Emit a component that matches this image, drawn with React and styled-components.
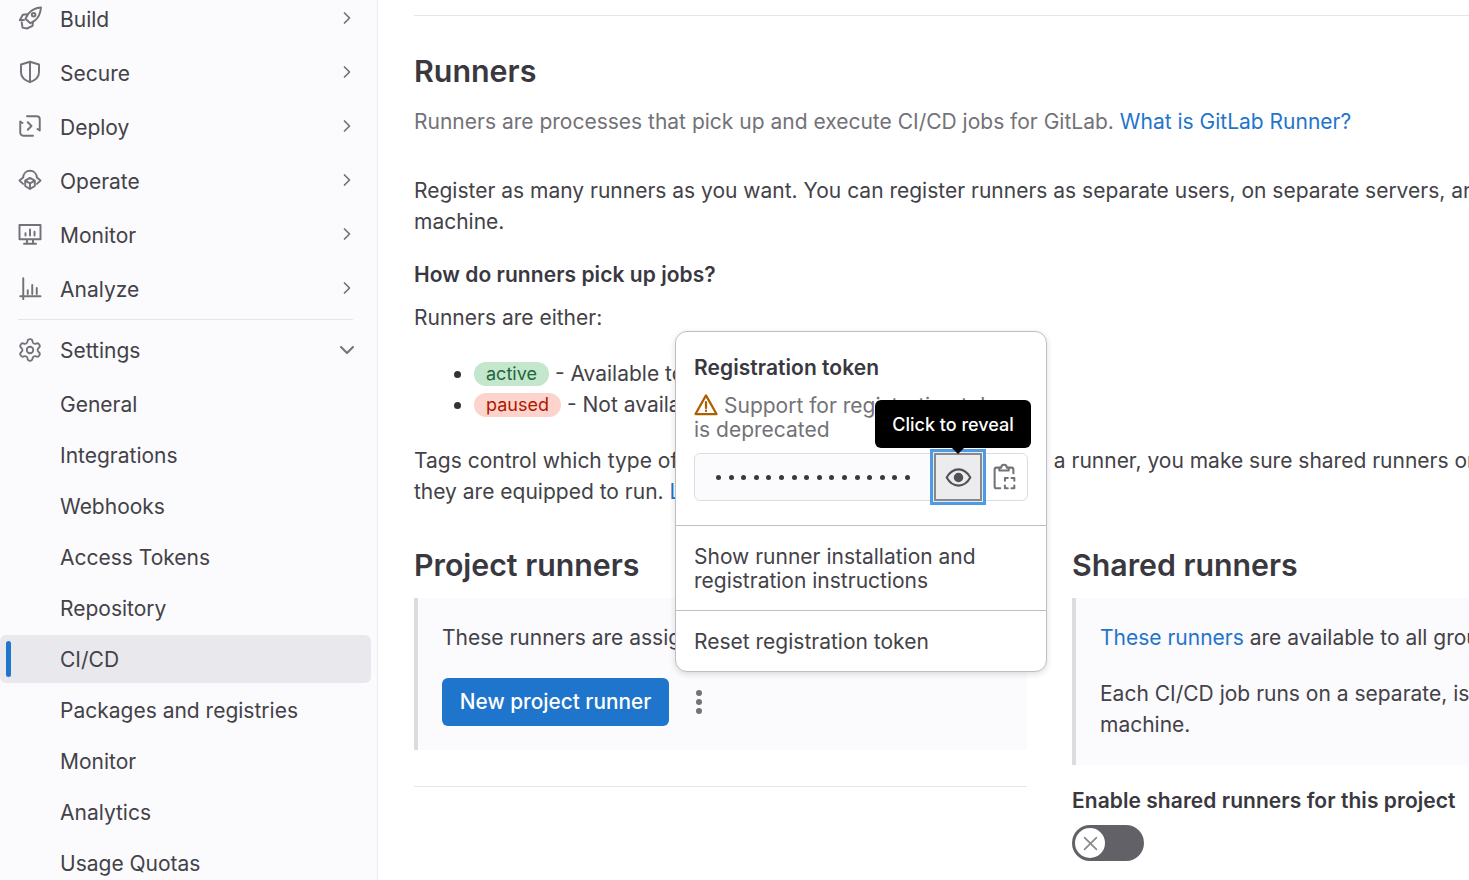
import React from 'react';
import styled, { createGlobalStyle } from 'styled-components';
import { Settings } from 'lucide-react';

const Global = createGlobalStyle`
html, body { margin: 0; padding: 0; height: 880px; overflow: hidden; background: #fff; }
body { font-family: Inter, "Noto Sans", sans-serif; font-size: 21px; color: #434248; }
* { box-sizing: border-box; }
`;

const Page = styled.div`
display: flex;
width: 1469px;
height: 880px;
overflow: hidden;
`;

// sidebar
const Sidebar = styled.nav`
flex: 0 0 378px;
height: 880px;
overflow: hidden;
background: #fbfafd;
border-right: 1px solid #ececef;
`;
const NavList = styled.div`
margin-top: -9px;
`;
const NavRow = styled.div`
display: flex;
align-items: center;
height: 54px;
padding: 0 20px 0 18px;
gap: 18px;
svg { flex: none; }
span { flex: 1; padding-top: ${p => (p.$open ? '0' : '2px')}; }
`;
const Divider = styled.div`
height: 1px;
margin: 4px 18px 3px 18px;
width: 335px;
background: #e6e5e9;
`;
const SubList = styled.div`
display: flex;
flex-direction: column;
gap: 3px;
margin-top: 3px;
padding-right: 6px;
`;
const SubRow = styled.div`
position: relative;
flex: none;
display: flex;
align-items: center;
height: 48px;
padding-left: 60px;
border-radius: 6px;
background: ${p => (p.$active ? '#e9e8ec' : 'transparent')};
${p => p.$active && `
&::before {
  content: '';
  position: absolute;
  left: 6px;
  top: 6px;
  bottom: 6px;
  width: 5px;
  border-radius: 3px;
  background: #1f75cb;
}`}
`;
const GearIcon = styled(Settings)`
margin: 0 -1px;
`;
const ChevronDown = styled.svg`
margin-right: -2px;
`;

// main
const Main = styled.main`
flex: 1;
min-width: 0;
overflow: hidden;
position: relative;
padding: 15px 0 0 36px;
`;
const Inner = styled.div`
width: 1271px;
`;
const Rule = styled.hr`
margin: 0;
border: 0;
height: 1px;
background: #e6e5e9;
`;
const Title = styled.h2`
margin: 33px 0 0;
font-size: 30.4px;
line-height: 44px;
font-weight: 600;
color: #3a383f;
`;
const Para = styled.p`
margin: ${p => p.$top || 0}px 0 0;
line-height: 31px;
color: ${p => (p.$muted ? '#737278' : 'inherit')};
`;
const Bold = styled.p`
margin: ${p => p.$top || 0}px 0 0;
line-height: 31px;
font-weight: 600;
letter-spacing: 0.05px;
color: #3a383f;
`;
const Link = styled.a`
color: #1f75cb;
`;
const StateList = styled.ul`
margin: 25px 0 0;
padding-left: 60px;
line-height: 31px;
li::marker { color: #333238; }
`;
const Badge = styled.span`
display: inline-block;
height: 24px;
line-height: 24px;
padding: 0 12px;
margin-right: 6px;
border-radius: 12px;
font-size: 18px;
vertical-align: 1px;
background: ${p => (p.$kind === 'active' ? '#c3e6cd' : '#fdd4cd')};
color: ${p => (p.$kind === 'active' ? '#24663b' : '#ae1800')};
`;
const Columns = styled.div`
display: grid;
grid-template-columns: 613px 613px;
column-gap: 45px;
margin-top: 36px;
`;
const ColTitle = styled.h3`
margin: 0;
font-size: 30.3px;
line-height: 44px;
font-weight: 600;
color: #3a383f;
`;
const Card = styled.div`
margin-top: 11px;
padding: 24px 28px ${p => p.$bottom || 24}px 24px;
background: #fbfafd;
border-left: 4px solid #dcdcde;
`;
const CardActions = styled.div`
display: flex;
align-items: center;
gap: 27px;
margin-top: 25px;
`;
const PrimaryButton = styled.button`
height: 48px;
width: 227px;
padding: 0 0 2px;
border: 0;
border-radius: 6px;
background: #1f75cb;
color: #fff;
font: 500 20.8px Inter, sans-serif;
`;
const Kebab = styled.div`
display: flex;
flex-direction: column;
gap: 3px;
i { width: 6px; height: 6px; border-radius: 50%; background: #737278; }
`;
const ColRule = styled.hr`
margin: 36px 0 0;
border: 0;
height: 1px;
background: #e6e5e9;
`;
const Toggle = styled.div`
position: relative;
width: 72px;
height: 36px;
margin-top: 9px;
border-radius: 18px;
background: #626168;
`;
const Thumb = styled.div`
position: absolute;
left: 3px;
top: 3px;
width: 30px;
height: 30px;
border-radius: 50%;
background: #fff;
display: flex;
align-items: center;
justify-content: center;
`;

// dropdown
const Popover = styled.div`
position: absolute;
left: 297px;
top: 331px;
width: 372px;
height: 341px;
background: #fff;
border: 1px solid #bfbfc3;
border-radius: 12px;
box-shadow: 0 2px 6px rgba(5, 5, 6, 0.14);
z-index: 2;
`;
const PopTop = styled.div`
height: 194px;
padding: 18px 18px 0;
border-bottom: 1px solid #bfbfc3;
`;
const PopTitle = styled.div`
font-weight: 600;
line-height: 35px;
letter-spacing: 0.05px;
color: #3a383f;
`;
const PopWarn = styled.div`
line-height: 24px;
margin-top: 8px;
white-space: nowrap;
color: #737278;
svg { vertical-align: -4px; margin-right: 6px; }
`;
const TokenGroup = styled.div`
display: flex;
position: relative;
width: 334px;
height: 48px;
margin-top: 11px;
border: 1px solid #dcdcde;
border-radius: 6px;
`;
const TokenField = styled.div`
flex: 1;
display: flex;
align-items: center;
padding-left: 21px;
gap: 7.6px;
background: #fbfafd;
border-radius: 6px 0 0 6px;
`;
const Dot = styled.b`
flex: none;
width: 5px;
height: 5px;
border-radius: 50%;
background: #3a383f;
`;
const EyeButton = styled.div`
position: relative;
flex: 0 0 48px;
margin: -1px 0;
height: 48px;
display: flex;
align-items: center;
justify-content: center;
background: #ececef;
border: 2px solid #89888d;
box-shadow: 0 0 0 1px #dfeefb, 0 0 0 4px #4f9ae0;
`;
const CopyButton = styled.div`
flex: 0 0 45px;
display: flex;
align-items: center;
justify-content: center;
padding-right: 2px;
`;
const Tooltip = styled.div`
position: absolute;
left: 180px;
top: -54px;
width: 156px;
height: 48px;
display: flex;
align-items: center;
justify-content: center;
background: #000;
color: #fff;
border-radius: 6px;
font-size: 18px;
font-weight: 500;
z-index: 3;
&::after {
  content: '';
  position: absolute;
  left: 77px;
  bottom: -6px;
  border-left: 6px solid transparent;
  border-right: 6px solid transparent;
  border-top: 6px solid #000;
}
`;
const PopItem = styled.div`
padding: 19px 18px 17px;
line-height: 24px;
border-bottom: ${p => (p.$last ? '0' : '1px solid #bfbfc3')};
`;

// icons
const Ico = ({ children, size = 24, color = '#737278', sw = 1.3 }) => (
  <svg width={size} height={size} viewBox="0 0 16 16" fill="none" stroke={color} strokeWidth={sw} strokeLinecap="round" strokeLinejoin="round">
    {children}
  </svg>
);
const icons = {
  Build: <Ico><path d="M15.300 1C11.500 1.200 8.800 2.800 6.800 5.200L5 8.500 8.200 11.500 11.200 9.700C13.600 7.800 15 4.800 15.300 1Z" /><circle cx="10.400" cy="5.800" r="1.200" /><path d="M6 5.500 3.200 5.800 1.200 9.500 4 9.300M10 10.500 9.700 13.200 6 15 3 14.400 2.500 11" /></Ico>,
  Secure: <Ico><path d="M8 1.200 14 3v5.200c0 3-2.600 5.400-6 6.600-3.400-1.200-6-3.600-6-6.600V3ZM8 1.200v13.600" /></Ico>,
  Deploy: <Ico><path d="M6 1.500h6.500a2 2 0 0 1 2 2V11l-1.500-1M10 14.500H3.500a2 2 0 0 1-2-2V5L3 6M6.500 5.500 9 8l-2.500 2.500" /></Ico>,
  Operate: <Ico><path d="M3.400 10.600 1 8.400 3.400 6.400C3.600 3.600 5.600 1.800 8 1.800s4.400 1.800 4.600 4.600L15 8.400l-2.400 2.200" /><path d="M8 6.600 11.200 8.400V12L8 14 4.800 12V8.400ZM4.800 8.400 8 10.200 11.200 8.400M8 10.200V14" /></Ico>,
  Monitor: <Ico><path d="M1 2h14v9.500H1ZM4 14.500h8M6 11.500v3M10 11.500v3M5 9V7.500M8 9V5M11 9V6.500" /></Ico>,
  Analyze: <Ico><path d="M1.500 13.500h13.500M3.500 1.500v14M6.500 12V9.500M9.500 12V6M12.500 12V8" /></Ico>,
  Settings: <GearIcon size={26} color="#737278" strokeWidth={1.7} />,
};
const Chevron = () => (
  <Ico size={20} color="#737278" sw={1.4}>
    <path d="M6 4l4 4-4 4" />
  </Ico>
);

const top = ['Build', 'Secure', 'Deploy', 'Operate', 'Monitor', 'Analyze'];
const sub = ['General', 'Integrations', 'Webhooks', 'Access Tokens', 'Repository', 'CI/CD', 'Packages and registries', 'Monitor', 'Analytics', 'Usage Quotas'];

export default function App() {
  return (
    <Page>
      <Global />
      <Sidebar>
        <NavList>
          {top.map((name) => (
            <NavRow key={name}>
              {icons[name]}
              <span>{name}</span>
              <Chevron />
            </NavRow>
          ))}
          <Divider />
          <NavRow $open>
            {icons.Settings}
            <span>Settings</span>
            <ChevronDown width="24" height="24" viewBox="0 0 16 16" fill="none" stroke="#737278" strokeWidth="1.4" strokeLinecap="round" strokeLinejoin="round">
              <path d="M4 6l4 4 4-4" />
            </ChevronDown>
          </NavRow>
        </NavList>
        <SubList>
          {sub.map((name, i) => (
            <SubRow key={i} $active={name === 'CI/CD'}>{name}</SubRow>
          ))}
        </SubList>
      </Sidebar>
      <Main>
        <Inner>
          <Rule />
          <Title>Runners</Title>
          <Para $top={13} $muted>
            Runners are processes that pick up and execute CI/CD jobs for GitLab. <Link>What is GitLab Runner?</Link>
          </Para>
          <Para $top={38}>
            Register as many runners as you want. You can register runners as separate users, on separate servers, and on your local machine.
          </Para>
          <Bold $top={22}>How do runners pick up jobs?</Bold>
          <Para $top={12}>Runners are either:</Para>
          <StateList>
            <li><Badge $kind="active">active</Badge>- Available to run jobs.</li>
            <li><Badge $kind="paused">paused</Badge>- Not available to run jobs.</li>
          </StateList>
          <Para $top={25}>
            Tags control which type of jobs a runner can handle. By tagging a runner, you make sure shared runners only handle the jobs they are equipped to run. <Link>Learn more.</Link>
          </Para>
          <Columns>
            <div>
              <ColTitle>Project runners</ColTitle>
              <Card>
                <Para>These runners are assigned to this project.</Para>
                <CardActions>
                  <PrimaryButton>New project runner</PrimaryButton>
                  <Kebab><i /><i /><i /></Kebab>
                </CardActions>
              </Card>
              <ColRule />
            </div>
            <div>
              <ColTitle>Shared runners</ColTitle>
              <Card $bottom={25}>
                <Para><Link>These runners</Link> are available to all groups and projects.</Para>
                <Para $top={25}>Each CI/CD job runs on a separate, isolated virtual machine.</Para>
              </Card>
              <Bold $top={20}>Enable shared runners for this project</Bold>
              <Toggle>
                <Thumb>
                  <Ico size={19} color="#89888d" sw={1.4}><path d="M3 3l10 10M13 3 3 13" /></Ico>
                </Thumb>
              </Toggle>
            </div>
          </Columns>
        </Inner>
        <Popover>
          <PopTop>
            <PopTitle>Registration token</PopTitle>
            <PopWarn>
              <Ico size={24} color="#ab6100" sw={1.5}>
                <path d="M8 1.600 15 14H1ZM8 6v4M8 11.800v.2" />
              </Ico>
              Support for registration tokens<br />is deprecated
            </PopWarn>
            <TokenGroup>
              <TokenField>
                {Array.from({ length: 16 }).map((_, i) => <Dot key={i} />)}
              </TokenField>
              <EyeButton>
                <Ico size={27} color="#535158" sw={1.25}>
                  <path d="M1 8c1.800-3.200 4.200-4.800 7-4.800s5.200 1.600 7 4.800c-1.800 3.200-4.200 4.800-7 4.800S2.800 11.200 1 8Z" />
                  <circle cx="8" cy="8" r="2.200" fill="#535158" />
                </Ico>
              </EyeButton>
              <CopyButton>
                <Ico size={30} color="#737278" sw={1.1}>
                  <path d="M5.500 3H4a1 1 0 0 0-1 1v9a1 1 0 0 0 1 1h2M10.500 3H12a1 1 0 0 1 1 1v2M5.500 4.500V3h1a1.500 1.500 0 0 1 3 0h1v1.500ZM8.500 10V8.500H10M12 8.500h1.500V10M13.500 12.500V14H12M10 14H8.500v-1.500" />
                </Ico>
              </CopyButton>
              <Tooltip>Click to reveal</Tooltip>
            </TokenGroup>
          </PopTop>
          <PopItem>Show runner installation and<br />registration instructions</PopItem>
          <PopItem $last>Reset registration token</PopItem>
        </Popover>
      </Main>
    </Page>
  );
}
